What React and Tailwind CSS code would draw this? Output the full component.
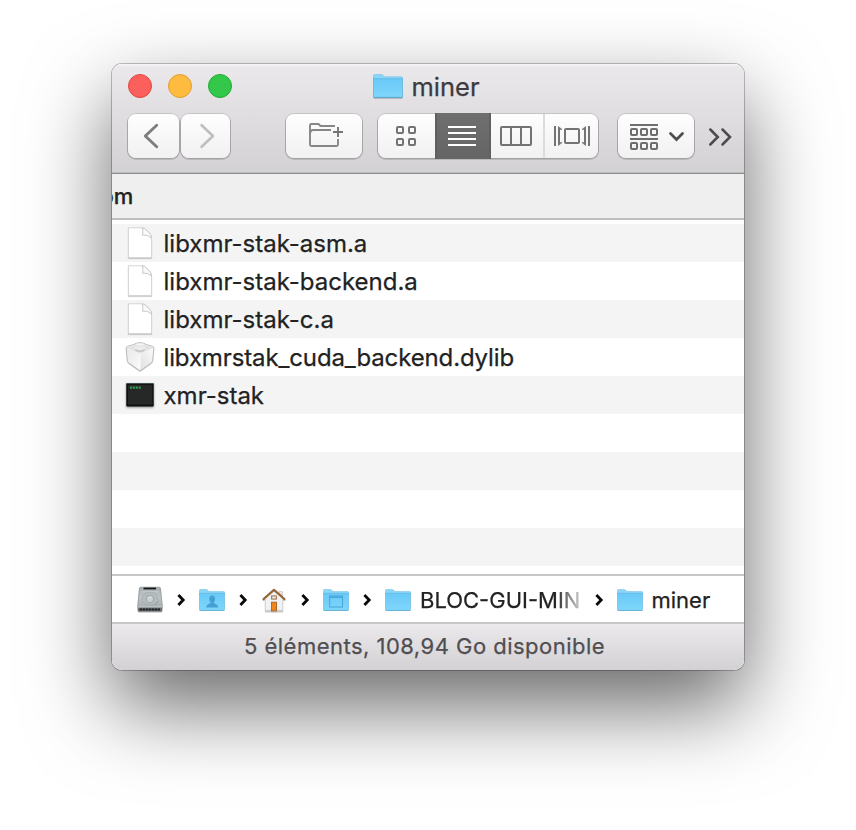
const FILES = [
  { name: 'libxmr-stak-asm.a', kind: 'doc' },
  { name: 'libxmr-stak-backend.a', kind: 'doc' },
  { name: 'libxmr-stak-c.a', kind: 'doc' },
  { name: 'libxmrstak_cuda_backend.dylib', kind: 'brick', tight: true },
  { name: 'xmr-stak', kind: 'term' },
  null,
  null,
  null,
  null,
];

const BUTTON =
  'h-[44px] shrink-0 rounded-[8px] bg-linear-to-b from-[#fefefe] to-[#f1f1f1] shadow-[0_0_0_1px_rgba(0,0,0,0.12),0_1px_0_1px_rgba(0,0,0,0.13)]';

function Gradients() {
  return (
    <svg className="absolute h-0 w-0" aria-hidden="true">
      <defs>
        <linearGradient id="folderFront" x1="0" y1="0" x2="0" y2="1">
          <stop offset="0" stopColor="#69c9f7" />
          <stop offset="1" stopColor="#7fd6fb" />
        </linearGradient>
        <linearGradient id="metal" x1="0" y1="0" x2="0" y2="1">
          <stop offset="0" stopColor="#a3abae" />
          <stop offset="0.5" stopColor="#bfc6c8" />
          <stop offset="1" stopColor="#a9b0b2" />
        </linearGradient>
        <linearGradient id="brickLeft" x1="0" y1="0" x2="1" y2="1">
          <stop offset="0" stopColor="#e9e9e9" />
          <stop offset="1" stopColor="#fafafa" />
        </linearGradient>
        <linearGradient id="brickRight" x1="1" y1="0" x2="0" y2="1">
          <stop offset="0" stopColor="#fafafa" />
          <stop offset="1" stopColor="#e0e0e0" />
        </linearGradient>
      </defs>
    </svg>
  );
}

function Folder({ className, badge }) {
  return (
    <svg className={`shrink-0 ${className}`} viewBox="0 0 26 22" preserveAspectRatio="none">
      <path d="M0.4 5V1.4Q0.4 0.5 1.3 0.5H7.2Q8 0.5 8.6 1.1L10 2.5H24.7Q25.6 2.5 25.6 3.4V6H0.4Z" fill="#8bd5f7" stroke="#6fbde2" strokeWidth="0.5" />
      <path d="M0.4 4.3H25.6V20.6Q25.6 21.4 24.8 21.4H1.2Q0.4 21.4 0.4 20.6Z" fill="url(#folderFront)" stroke="#5db4dd" strokeWidth="0.6" />
      <path d="M0.6 21.6H25.4" stroke="#4d9fc8" strokeWidth="0.6" />
      {badge === 'user' && (
        <path d="M13.2 6.6c2 0 3 1.4 2.9 3.3-.1 1.6-.7 2.4-1.2 3v1.2c1.6.9 4.1 1.3 4.3 4.5H7.2c.2-3.200 2.700-3.600 4.300-4.500v-1.200c-.5-.6-1.100-1.400-1.200-3-.1-1.900.9-3.300 2.900-3.300z" fill="#45a1d3" />
      )}
      {badge === 'window' && (
        <g fill="none" stroke="#45a5d8" strokeWidth="1">
          <rect x="6.700" y="7" width="12.800" height="11" />
          <path d="M6.700 8.200H19.500" strokeWidth="1.300" />
        </g>
      )}
    </svg>
  );
}

function DocIcon() {
  return (
    <svg className="h-[34px] w-[30px] drop-shadow-[0_1px_0.5px_rgba(0,0,0,0.2)]" viewBox="0 0 30 34">
      <path d="M3.400 1.800H17.500Q19.800 2.200 21.500 4L25 7.800Q26.600 9.600 26.600 12V31.600H3.400Z" fill="#fff" stroke="#d0d0d0" strokeWidth="0.9" />
      <path d="M17.300 1.800Q18.400 5 17.600 9.200Q23 8.300 26.500 12Q26.500 9.500 25 7.800L21.500 4Q19.800 2.200 17.300 1.800Z" fill="#fafafa" stroke="#c3c3c3" strokeWidth="0.9" />
    </svg>
  );
}

function BrickIcon() {
  return (
    <svg className="h-[34px] w-[30px] drop-shadow-[0_1px_0.5px_rgba(0,0,0,0.2)]" viewBox="0 0 30 34">
      <path d="M1.200 8Q1 6.700 2.200 6.400L10 4.200V3.600Q15 1.400 20 3.600V4.200L27.800 6.400Q29 6.700 28.800 8L27.600 20.500Q27.500 21.800 26.500 22.600L15.800 30.200Q15 30.700 14.200 30.200L3.500 22.600Q2.500 21.800 2.400 20.500Z" fill="#f1f1f1" stroke="#b9b9b9" strokeWidth="0.9" />
      <path d="M1.800 8L15 14V30L3.500 21.800Z" fill="url(#brickLeft)" />
      <path d="M28.200 8L15 14V30L26.500 21.800Z" fill="url(#brickRight)" />
      <path d="M1.800 7.500L10 4.600H20L28.200 7.500L15 13.700Z" fill="#e3e3e3" />
      <ellipse cx="15" cy="10" rx="4.800" ry="2" fill="#c9c9c9" />
      <path d="M10.200 4.800V8.700Q15 11.600 19.800 8.700V4.800Z" fill="#ededed" />
      <ellipse cx="15" cy="4.600" rx="4.800" ry="1.700" fill="#f3f3f3" stroke="#d2d2d2" strokeWidth="0.6" />
      <path d="M15 14V29" stroke="#fff" strokeWidth="0.8" />
    </svg>
  );
}

function TermIcon() {
  return (
    <svg className="h-[34px] w-[30px] drop-shadow-[0_1px_1px_rgba(0,0,0,0.45)]" viewBox="0 0 30 34">
      <rect x="1.300" y="5.200" width="27.400" height="23.300" rx="0.8" fill="#0b0c0c" />
      <path d="M1.300 5.500H28.700" stroke="#3f5557" strokeWidth="0.8" />
      <rect x="2.800" y="6.700" width="24.600" height="20" fill="#262727" />
      <path d="M5 9.700H15.800" stroke="#2b9a4e" strokeWidth="2.200" strokeDasharray="2.200 0.700" />
    </svg>
  );
}

function DriveIcon() {
  return (
    <svg className="h-[28px] w-[26px] shrink-0 drop-shadow-[0_1px_0.5px_rgba(0,0,0,0.3)]" viewBox="0 0 26 28">
      <path d="M3.400 1.200H22.400Q23.200 1.200 23.400 2L25.300 20.500H0.700L2.500 2Q2.600 1.200 3.400 1.200Z" fill="url(#metal)" stroke="#8c9598" strokeWidth="0.7" />
      <path d="M6.500 2.500H19" stroke="#17191a" strokeWidth="1.800" />
      <path d="M4.500 5.800H21.500" stroke="#cdd3d5" strokeWidth="0.8" />
      <path d="M5.400 9.500Q13 3 20.600 9.500L21.300 15.500Q13 22.500 4.700 15.500Z" fill="#b4bcbe" stroke="#a2abad" strokeWidth="0.7" />
      <circle cx="13" cy="13" r="3.700" fill="#c9d0d1" stroke="#949d9f" strokeWidth="0.8" />
      <path d="M10.800 12.200Q13 9.800 15.200 12.200" stroke="#e6eaeb" strokeWidth="0.8" fill="none" />
      <path d="M18 19L21 15.500" stroke="#8e979a" strokeWidth="0.8" />
      <path d="M0.700 20.800H25.300V24Q25.300 25.500 24 25.500H2Q0.700 25.500 0.700 24Z" fill="#6b7173" />
      <path d="M0.900 20.900H25.100" stroke="#dbe0e1" strokeWidth="1" />
      <path d="M2.600 23.500H23.400" stroke="#1c1e1f" strokeWidth="1.800" strokeDasharray="2.300 0.700" />
    </svg>
  );
}

function HomeIcon() {
  return (
    <svg className="mx-px h-[26px] w-[24px] shrink-0 drop-shadow-[0_1px_0.5px_rgba(0,0,0,0.25)]" viewBox="0 0 24 26">
      <path d="M17 4.500H20.300V10L17 7Z" fill="#e8e8e8" stroke="#bdbdbd" strokeWidth="0.6" />
      <path d="M3.300 11.500L12 3.600L20.700 11.500V24H3.300Z" fill="#f2f2f2" stroke="#c4c4c4" strokeWidth="0.6" />
      <path d="M3.300 22.700H20.700V24.200H3.300Z" fill="#d2d2d2" />
      <path d="M1.600 12L12 2.900L22.400 12" fill="none" stroke="#94683b" strokeWidth="2.300" strokeLinejoin="round" strokeLinecap="round" />
      <rect x="9.600" y="8.900" width="4.800" height="3.200" fill="#dce5ec" stroke="#a47143" strokeWidth="1" />
      <rect x="9.500" y="15.200" width="5" height="8.700" fill="#f08519" stroke="#a5632a" strokeWidth="0.9" />
    </svg>
  );
}

function PathChevron() {
  return (
    <svg className="mx-[13.5px] h-[14px] w-[9px] shrink-0" viewBox="0 0 9 14">
      <path d="M1.400 2L6.200 7L1.400 12" fill="none" stroke="#0a0a0a" strokeWidth="2.800" />
    </svg>
  );
}

function Toolbar() {
  return (
    <div className="flex pl-[16px]">
      <button className={`${BUTTON} w-[51px]`}>
        <svg className="h-[44px] w-[51px]" viewBox="128 114 51 44" fill="none">
          <path d="M156.700 125.200L145.300 136L156.700 146.800" stroke="#7d7d7d" strokeWidth="2.900" strokeLinecap="round" strokeLinejoin="round" />
        </svg>
      </button>
      <button className={`${BUTTON} ml-[2px] w-[49px]`}>
        <svg className="h-[44px] w-[49px]" viewBox="181 114 49 44" fill="none">
          <path d="M201.600 125.200L213 136L201.600 146.800" stroke="#bfbfbf" strokeWidth="2.700" strokeLinecap="round" strokeLinejoin="round" />
        </svg>
      </button>
      <button className={`${BUTTON} ml-[56px] w-[76px]`}>
        <svg className="h-[44px] w-[76px]" viewBox="286 114 76 44" fill="none" stroke="#868686" strokeWidth="1.900">
          <path d="M335 126H320.500L318.500 124H311.500Q310 124 310 125.500V144.500Q310 146 311.500 146H336.500Q338 146 338 144.500V139" />
          <path d="M310.500 132.500Q310.500 130 313 130H331" />
          <path d="M338 127V137M333 132H343" stroke="#757575" />
        </svg>
      </button>
      <div className={`${BUTTON} ml-[16px] flex w-[220px]`}>
        <svg className="h-[44px] w-[57px]" viewBox="378 114 57 44" fill="none" stroke="#737373" strokeWidth="2">
          <rect x="397" y="127" width="6" height="6" rx="1" />
          <rect x="409" y="127" width="6" height="6" rx="1" />
          <rect x="397" y="139" width="6" height="6" rx="1" />
          <rect x="409" y="139" width="6" height="6" rx="1" />
        </svg>
        <div className="-my-px h-[46px] w-[56px] border-x-2 border-[#606060] bg-linear-to-b from-[#6f6f6f] to-[#656565]">
          <svg className="h-[46px] w-[52px]" viewBox="437 113 52 46" stroke="#fff" strokeWidth="2">
            <path d="M448 127H476M448 133H476M448 139H476M448 145H476" />
          </svg>
        </div>
        <svg className="h-[44px] w-[52px]" viewBox="491 114 52 44" fill="none" stroke="#737373" strokeWidth="2">
          <rect x="501" y="127" width="30" height="18" rx="1" />
          <path d="M511 127V145M521 127V145" />
        </svg>
        <div className="h-[44px] w-[2px] bg-[#dcdcdc]" />
        <svg className="h-[44px] w-[53px]" viewBox="545 114 53 44" fill="none" stroke="#737373" strokeWidth="2">
          <rect x="565" y="129" width="14" height="14" rx="1" />
          <path d="M555 126V146M589 126V146" />
          <path d="M558 126L562 129V130L560 129.500V142.500L562 142V143L558 146ZM586 126L582 129V130L584 129.500V142.500L582 142V143L586 146Z" fill="#737373" stroke="none" />
        </svg>
      </div>
      <button className={`${BUTTON} ml-[20px] w-[76px]`}>
        <svg className="h-[44px] w-[76px]" viewBox="618 114 76 44" fill="none" stroke="#6e6e6e" strokeWidth="2">
          <path d="M630 125H658M630 139H658" />
          <rect x="631" y="129" width="6" height="6" rx="1" />
          <rect x="641" y="129" width="6" height="6" rx="1" />
          <rect x="651" y="129" width="6" height="6" rx="1" />
          <rect x="631" y="143" width="6" height="6" rx="1" />
          <rect x="641" y="143" width="6" height="6" rx="1" />
          <rect x="651" y="143" width="6" height="6" rx="1" />
          <path d="M670.500 133.500L676.500 139.500L682.500 133.500" stroke="#4d4d4d" strokeWidth="2.700" strokeLinecap="round" />
        </svg>
      </button>
      <svg className="ml-[12px] h-[44px] w-[30px]" viewBox="706 114 30 44" fill="none" stroke="#4b4b4b" strokeWidth="2.500" strokeLinecap="round">
        <path d="M710.300 129.500L717.800 137L710.300 144.500M722.500 129.500L730 137L722.500 144.500" />
      </svg>
    </div>
  );
}

export default function App() {
  return (
    <div className="flex h-[830px] w-[856px] justify-center overflow-hidden bg-white pt-[64px] font-['Inter',sans-serif] text-[#222222] [-webkit-text-stroke:0.25px]">
      <Gradients />
      <div className="h-[606px] w-[632px] rounded-[10px] shadow-[0_0_0_1px_rgba(0,0,0,0.24),0_36px_84px_rgba(0,0,0,0.6)]">
        <div className="flex h-full flex-col overflow-hidden rounded-[10px] bg-white">
          <header className="h-[110px] shrink-0 border-b border-[#8f8e8f] bg-linear-to-b from-[#ebe9ec] to-[#d3d1d4] pt-[2px] shadow-[inset_0_2px_0_rgba(255,255,255,0.45),inset_0_-1px_0_#bdbcbd]">
            <div className="mb-[6px] flex h-[42px] items-start pt-[8px] pl-[16px]">
              <div className="flex gap-[16px]">
                <span className="size-[24px] rounded-full border border-[#e2463f] bg-[#fc605c]" />
                <span className="size-[24px] rounded-full border border-[#e09e33] bg-[#fdbc40]" />
                <span className="size-[24px] rounded-full border border-[#1fac30] bg-[#34c84a]" />
              </div>
              <Folder className="ml-[141px] h-[24px] w-[30px] drop-shadow-[0_1px_0.5px_rgba(0,0,0,0.2)]" />
              <span className="-mt-[3px] ml-[8.5px] text-[25.500px] leading-[32px] text-[#3d3a3e]">miner</span>
            </div>
            <Toolbar />
          </header>
          <div className="flex h-[46px] shrink-0 items-center overflow-hidden border-b-2 border-[#bfbfbf] bg-[#efefef]">
            <span className="-ml-[11.5px] text-[22px] font-medium leading-[28px]">om</span>
          </div>
          <ul className="h-[354px] shrink-0 pt-[4px]">
            {FILES.map((file, i) => (
              <li key={i} className={`flex h-[38px] items-center pl-[13px] ${i % 2 ? 'bg-white' : 'bg-[#f4f4f4]'}`}>
                {file && (
                  <>
                    {file.kind === 'doc' && <DocIcon />}
                    {file.kind === 'brick' && <BrickIcon />}
                    {file.kind === 'term' && <TermIcon />}
                    <span className={`mt-[2px] ml-[8.5px] text-[24px] leading-[30px] whitespace-nowrap ${file.tight ? 'tracking-[-0.13px]' : 'tracking-[0px]'}`}>
                      {file.name}
                    </span>
                  </>
                )}
              </li>
            ))}
          </ul>
          <nav className="flex h-[50px] shrink-0 items-center border-y-2 border-[#c6c6c6] bg-white pt-[2px] pl-[25px] text-[22px] leading-[28px]">
            <DriveIcon />
            <PathChevron />
            <Folder badge="user" className="h-[22px] w-[26px]" />
            <PathChevron />
            <HomeIcon />
            <PathChevron />
            <Folder badge="window" className="h-[22px] w-[26px]" />
            <PathChevron />
            <Folder className="h-[22px] w-[26px]" />
            <span className="ml-[9px] w-[161px] shrink-0 whitespace-nowrap mask-linear-90 mask-linear-from-84% mask-linear-to-104%">
              BLOC-GUI-MIN
            </span>
            <PathChevron />
            <Folder className="h-[22px] w-[26px]" />
            <span className="ml-[8.5px]">miner</span>
          </nav>
          <footer className="flex h-[46px] shrink-0 items-center justify-center bg-linear-to-b from-[#ebe9ec] to-[#d3d1d4] pr-[7px] pb-[2px] text-[22px] leading-[28px] tracking-[0.48px] text-[#504e50]">
            5 éléments, 108,94 Go disponible
          </footer>
        </div>
      </div>
    </div>
  );
}
